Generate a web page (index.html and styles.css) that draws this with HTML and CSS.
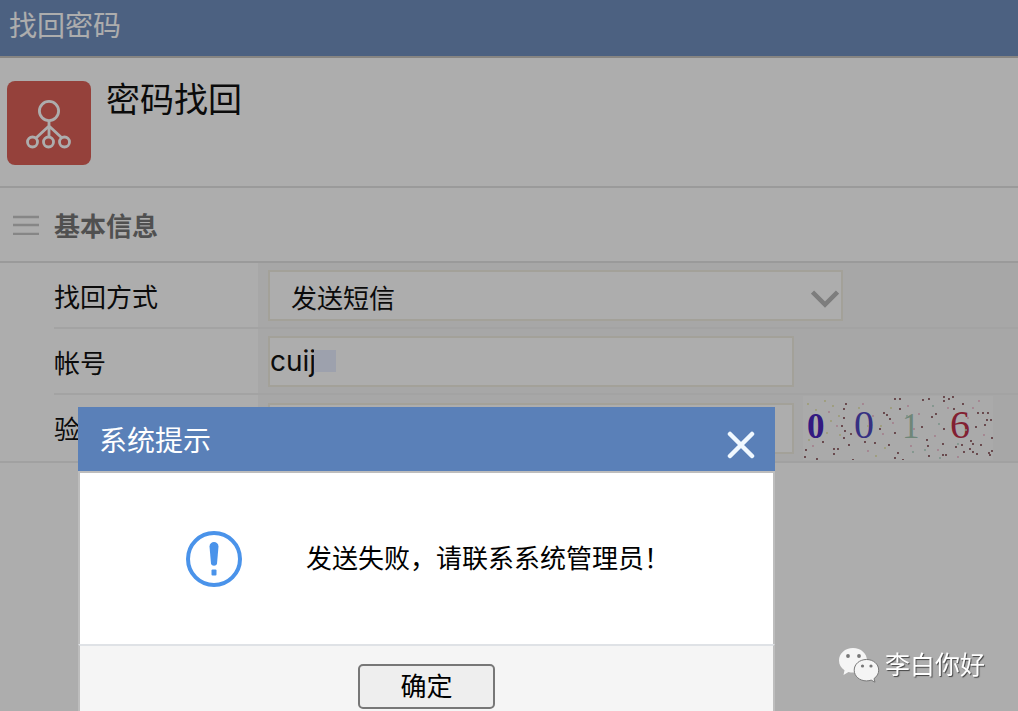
FILE: index.html
```html
<!DOCTYPE html>
<html lang="zh-CN">
    <head>
        <title>找回密码</title>
        <meta charset="utf-8">
        <meta name="viewport" content="width=device-width, initial-scale=1">
        <link rel="stylesheet" href="styles.css">
    </head>
    <body>
        <header class="topbar">找回密码</header>

        <main>
            <div class="page-head">
                <svg class="page-head__icon" viewBox="0 0 84 84" fill="none" stroke="#fff" stroke-width="2.8">
                    <rect width="84" height="84" rx="8" fill="#dc6158" stroke="none"/>
                    <circle cx="42" cy="30" r="9.6"/>
                    <path d="M42 40v16M42 45L29 57M42 45l13 12"/>
                    <circle cx="25.500" cy="61" r="5"/>
                    <circle cx="41.500" cy="61" r="5"/>
                    <circle cx="57.500" cy="61" r="5"/>
                </svg>
                <h1>密码找回</h1>
            </div>

            <div class="section-head">
                <svg class="section-head__icon" viewBox="0 0 26 20" stroke="#c6c6c6" stroke-width="2.400">
                    <path d="M0 2h26M0 10h26M0 19h26"/>
                </svg>
                <h2>基本信息</h2>
            </div>

            <form class="form">
                <div class="form__row">
                    <label class="form__label" for="method">找回方式</label>
                    <div class="form__field">
                        <div class="select">
                            <select id="method">
                                <option>发送短信</option>
                            </select>
                            <svg class="select__arrow" viewBox="0 0 28 18" fill="none" stroke="#b8b8b8" stroke-width="4.500">
                                <path d="M1.500 2L14 14.500 26.500 2"/>
                            </svg>
                        </div>
                    </div>
                </div>
                <div class="form__row">
                    <label class="form__label" for="account">帐号</label>
                    <div class="form__field">
                        <div class="account">
                            <input type="text" id="account" value="cuij">
                            <span class="account__mask"></span>
                        </div>
                    </div>
                </div>
                <div class="form__row">
                    <label class="form__label" for="code">验</label>
                    <div class="form__field">
                        <input type="text" id="code">
                        <svg class="captcha" viewBox="0 0 190 64">
                            <rect width="190" height="64" fill="#fbfbfb"/>
                            <g class="captcha__digits">
                                <text x="4" y="42" font-size="35" font-weight="bold" fill="#4a25be">0</text>
                                <text x="51" y="42" font-size="40" fill="#5048c0">0</text>
                                <text x="99" y="42" font-size="35" fill="#a4c6b2">1</text>
                                <text x="147" y="42" font-size="40" fill="#c0304a">6</text>
                            </g>
                            <!-- noise: each zero-length segment is one dot -->
                            <path class="captcha__noise" stroke="#7c4048" d="M43 8h0M41 13h0M41 22h0M39 30h0M42 35h0M48 38h0M41 42h0M46 49h0M81 17h0M84 19h0M87 23h0M92 3h0M97 3h0M97 13h0M92 37h0M86 49h0M95 57h0M92 62h0M100 64h0M77 33h0M119 31h0M124 44h0M125 50h0M126 60h0M129 21h0M133 18h0M120 4h0M126 3h0M141 1h0M141 5h0M146 3h0M150 1h0M151 13h0M160 8h0M141 33h0M140 48h0M140 59h0M143 59h0M153 51h0M159 49h0M161 56h0M168 45h0M170 48h0M167 53h0M170 56h0M174 58h0M178 49h0M189 42h0M189 55h0M187 59h0M186 57h0M175 17h0M180 17h0M185 17h0M184 24h0M188 24h0M182 29h0M173 31h0M20 46h0M31 53h0M35 53h0M31 58h0M3 54h0M2 61h0M14 63h0M50 64h0M62 46h0M72 47h0"/>
                            <path class="captcha__noise" stroke="#f0b8cc" d="M10 50h0M26 16h0M34 30h0M60 8h0M70 20h0M80 38h0M90 27h0M105 10h0M108 50h0M116 18h0M132 40h0M135 54h0M145 12h0M155 61h0M165 22h0M170 12h0M181 39h0M176 5h0M65 55h0M111 33h0"/>
                            <path class="captcha__noise" stroke="#e6e4a8" d="M5 8h0M13 14h0M22 5h0M28 25h0M37 39h0M56 12h0M65 30h0M78 30h0M82 52h0M88 12h0M24 37h0M6 44h0M36 20h0M73 60h0M30 10h0"/>
                            <path class="captcha__noise" stroke="#b4d8c8" d="M104 20h0M110 56h0M122 54h0M130 10h0M136 28h0M155 48h0M137 62h0M163 34h0"/>
                        </svg>
                    </div>
                </div>
            </form>
        </main>

        <div class="overlay">
            <div class="dialog" role="dialog" aria-labelledby="dialog-title">
                <div class="dialog__head">
                    <span id="dialog-title">系统提示</span>
                    <button type="button" class="dialog__close" aria-label="关闭">
                        <svg viewBox="0 0 28 28" stroke="#f0f8ff" stroke-width="4.500" stroke-linecap="round">
                            <path d="M3 3l22 22M25 3L3 25"/>
                        </svg>
                    </button>
                </div>
                <div class="dialog__body">
                    <svg class="dialog__icon" viewBox="0 0 56 56" fill="#4a93ea">
                        <circle cx="28" cy="28" r="26" fill="none" stroke="#4a93ea" stroke-width="4"/>
                        <path d="M23.500 15.500c0-6 9-6 9 0L31 32.500c-.6 3-5.400 3-6 0z"/>
                        <rect x="25.500" y="38.500" width="5" height="6" rx="1"/>
                    </svg>
                    <p>发送失败，请联系系统管理员！</p>
                </div>
                <div class="dialog__foot">
                    <button type="button" class="dialog__ok">确定</button>
                </div>
            </div>
        </div>

        <div class="watermark">
            <svg class="watermark__icon" viewBox="0 0 40 34">
                <path fill="#f5f5f5" d="M14 0C6 0 0 5.500 0 12.500c0 4 2 7.500 5.500 9.700L4.500 27l5-3c1.500.5 3 .6 4.500.6C22 24.600 28 19.500 28 12.500S22 0 14 0z"/>
                <path fill="#f5f5f5" stroke="#777" d="M27.500 11.500c-7 0-12.300 4.700-12.300 10.700s5.300 10.700 12.300 10.700c1.700 0 3.300-.3 4.700-.8l3.800 2.100-1-3.600c2.900-2 4.700-5 4.700-8.400 0-6-5.200-10.700-12.200-10.700z"/>
                <g fill="#777">
                    <circle cx="9" cy="8" r="1.900"/>
                    <circle cx="20" cy="8" r="1.900"/>
                    <circle cx="23.500" cy="18" r="1.600"/>
                    <circle cx="32" cy="18" r="1.600"/>
                </g>
            </svg>
            <span>李白你好</span>
        </div>
    </body>
</html>
```
FILE: styles.css
```css
* {
    box-sizing: border-box;
}

body {
    margin: 0;
    min-height: 100vh;
    background: #fff;
    color: #111;
    font-family: Inter, "Noto Sans CJK SC", sans-serif;
    font-size: 26px;
    line-height: 36px;
}

h1,
h2,
p {
    margin: 0;
}

button,
input,
select {
    font: inherit;
    color: inherit;
}

svg {
    display: block;
    flex: none;
}

.topbar {
    height: 58px;
    padding: 8px 9px;
    border-bottom: 2px solid #c8c4c0;
    background: #7190bf;
    color: #fff;
    font-size: 28px;
}

.page-head {
    display: flex;
    align-items: flex-start;
    gap: 15px;
    padding: 23px 7px 21px;
    border-bottom: 2px solid #e4e4e4;
}

.page-head__icon {
    width: 84px;
    height: 84px;
}

.page-head h1 {
    font-size: 34px;
    font-weight: 400;
    line-height: 38px;
}

.section-head {
    display: flex;
    align-items: center;
    gap: 15px;
    height: 75px;
    padding-left: 13px;
    border-bottom: 2px solid #e4e4e4;
}

.section-head__icon {
    width: 26px;
    height: 20px;
}

.section-head h2 {
    padding-top: 4px;
    color: #777;
    font-size: 26px;
    font-weight: 700;
}

.form {
    border-bottom: 2px solid #eee;
}

.form__row {
    display: flex;
    height: 66px;
    margin-left: 54px;
    border-bottom: 2px solid #f0f0f0;
}

.form__row:last-child {
    border-bottom: none;
}

.form__label {
    width: 204px;
    padding-top: 17px;
}

.form__field {
    display: flex;
    flex: 1;
    align-items: center;
    gap: 9px;
    padding-left: 10px;
    background: #f7f7f7;
}

.form input,
.form select {
    display: block;
    width: 526px;
    height: 51px;
    margin: 0;
    padding: 0;
    border: 2px solid #f0eee2;
    border-radius: 0;
    outline: none;
    background: #fff;
}

.form input {
    font-size: 28px;
}

.form select {
    width: 575px;
    padding: 8px 20px 0 21px;
    appearance: none;
}

.select,
.account {
    position: relative;
}

.select__arrow {
    position: absolute;
    top: 20px;
    right: 4px;
    width: 28px;
    height: 18px;
    pointer-events: none;
}

.account__mask {
    position: absolute;
    top: 14px;
    left: 46px;
    width: 22px;
    height: 22px;
    background: #e8eeff;
}

.captcha {
    width: 190px;
    height: 64px;
}

.captcha__digits {
    font-family: "Liberation Serif", serif;
}

.captcha__noise {
    fill: none;
    stroke-width: 2;
    stroke-linecap: round;
}

.overlay {
    position: fixed;
    inset: 0;
    overflow: hidden;
    background: rgba(0, 0, 0, 0.32);
}

.dialog {
    width: 697px;
    margin: 407px 0 0 78px;
    color: #000;
}

.dialog__head {
    display: flex;
    justify-content: space-between;
    height: 64px;
    padding: 16px 20px 0 21px;
    background: #5a80b8;
    color: #fff;
    font-size: 28px;
}

.dialog__close {
    height: 44px;
    padding: 0;
    border: none;
    background: none;
    cursor: pointer;
}

.dialog__close svg {
    width: 28px;
    height: 28px;
}

.dialog__body {
    display: flex;
    align-items: center;
    gap: 64px;
    height: 173px;
    padding-left: 106px;
    border: 2px solid #bdbdbd;
    border-bottom: none;
    background: #fff;
}

.dialog__icon {
    width: 56px;
    height: 56px;
}

.dialog__foot {
    padding: 18px 0;
    border: 2px solid #bdbdbd;
    border-top-color: #dfe2e6;
    background: #f5f5f5;
    text-align: center;
}

.dialog__ok {
    width: 137px;
    height: 45px;
    padding: 0;
    border: 2px solid #777;
    border-radius: 5px;
    background: #eee;
    cursor: pointer;
}

.watermark {
    position: fixed;
    right: 33px;
    bottom: 28px;
    display: flex;
    align-items: center;
    gap: 6px;
    color: #fff;
    font-size: 25px;
    text-shadow: 1px 1px 1px #444;
}

.watermark__icon {
    width: 40px;
    height: 34px;
    overflow: visible;
}
```
